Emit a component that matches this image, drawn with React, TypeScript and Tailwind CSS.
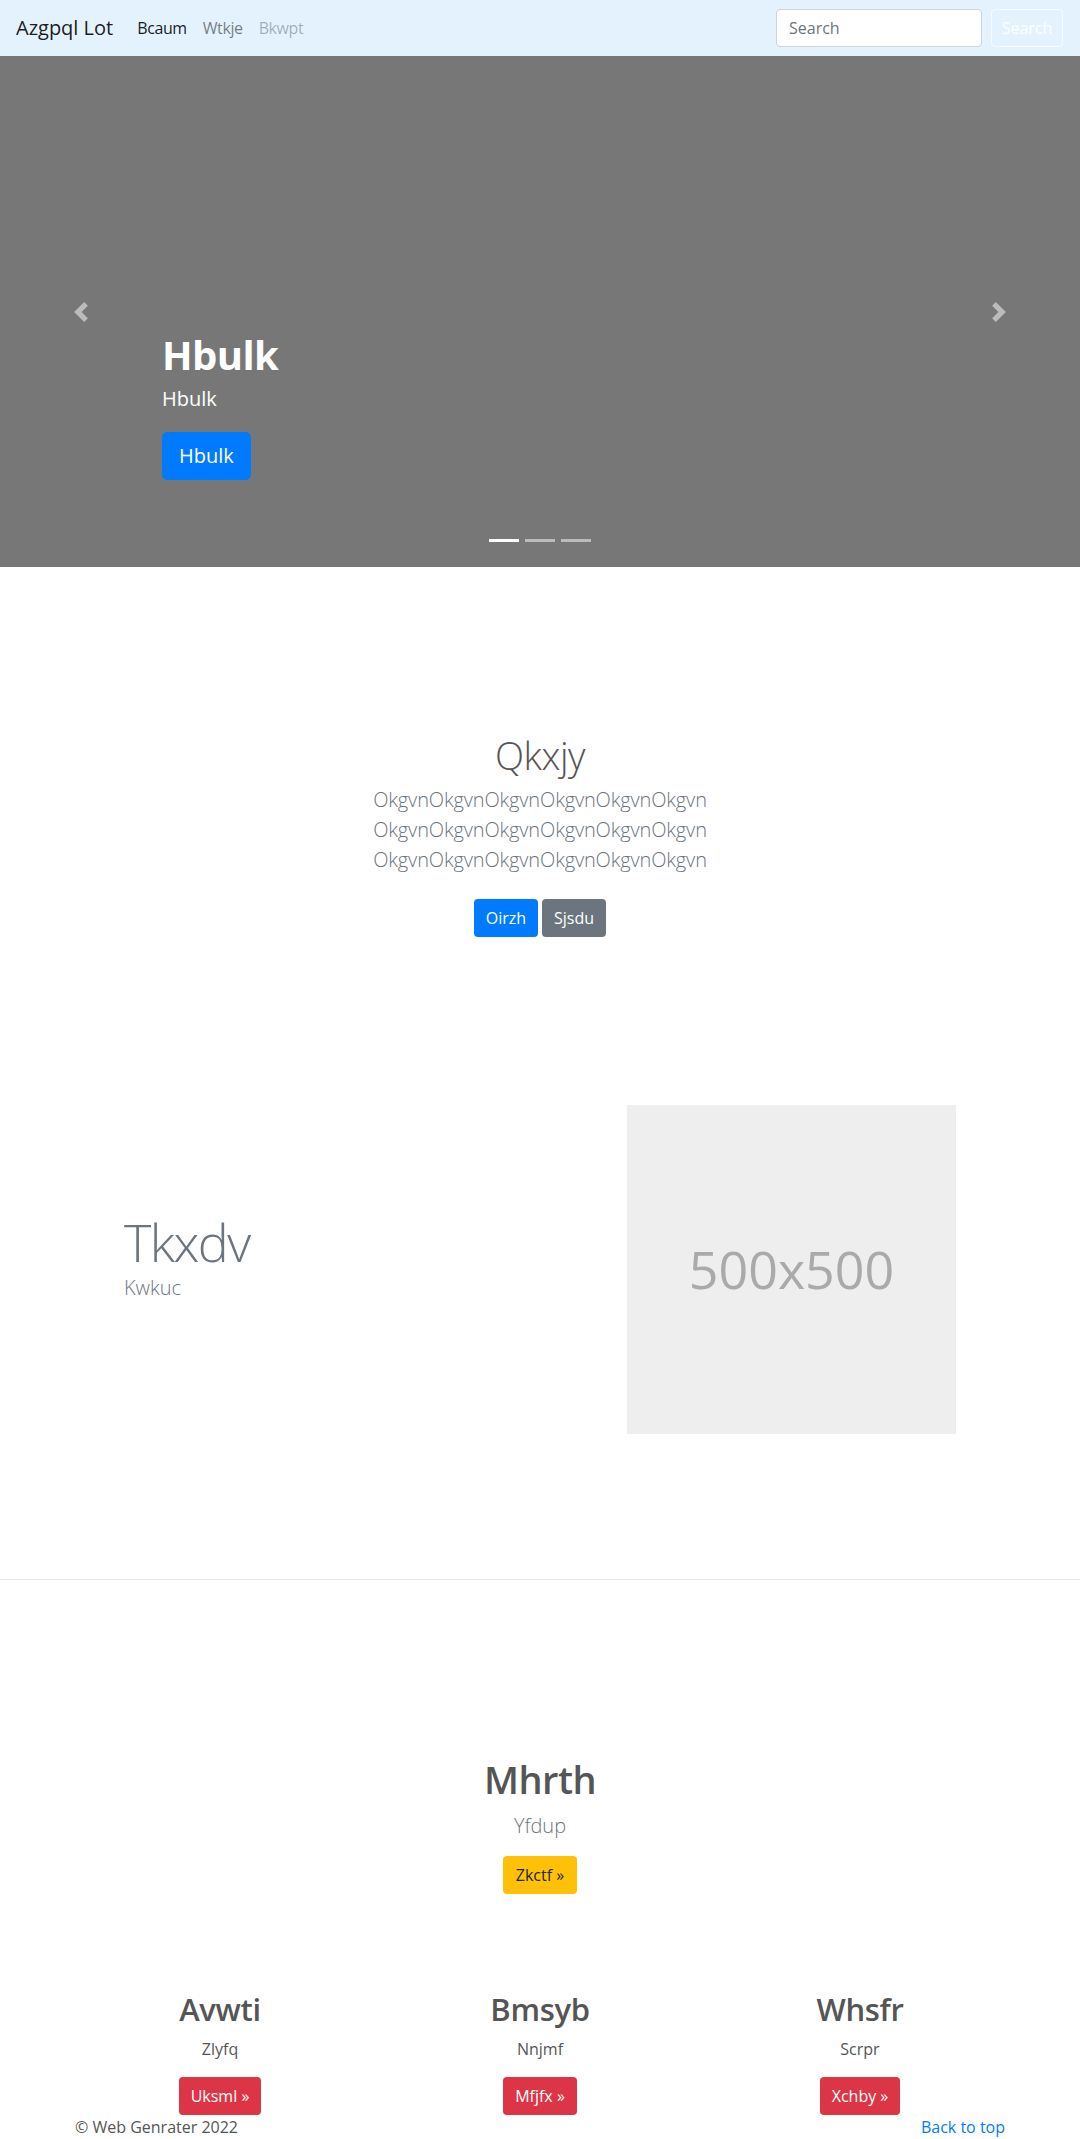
import React from "react";

const navLinks = [
  { label: "Bcaum", cls: "text-black/90" },
  { label: "Wtkje", cls: "text-black/50" },
  { label: "Bkwpt", cls: "text-black/30" },
];

const columns = [
  { title: "Avwti", text: "Zlyfq", btn: "Uksml »" },
  { title: "Bmsyb", text: "Nnjmf", btn: "Mfjfx »" },
  { title: "Whsfr", text: "Scrpr", btn: "Xchby »" },
];

const Chevron = ({ dir }: { dir: "prev" | "next" }) => (
  <svg width="20" height="20" viewBox="0 0 8 8" fill="#fff" fillOpacity="0.5">
    {dir === "prev" ? (
      <path d="M5.25 0l-4 4 4 4 1.5-1.5L4.25 4l2.5-2.5L5.25 0z" />
    ) : (
      <path d="M2.75 0l-1.5 1.5L3.75 4l-2.5 2.5L2.75 8l4-4-4-4z" />
    )}
  </svg>
);

const Navbar = () => (
  <nav className="h-[56px] bg-[#e3f2fd] flex items-center pl-4 pr-[17px]">
    <span className="text-[20px] text-black/90 mr-4">Azgpql Lot</span>
    <div className="flex">
      {navLinks.map((l) => (
        <span key={l.label} className={`px-2 text-[16px] tracking-[-0.4px] ${l.cls}`}>
          {l.label}
        </span>
      ))}
    </div>
    <div className="ml-auto flex items-center">
      <input
        placeholder="Search"
        className="w-[206px] h-[38px] bg-white border border-[#ced4da] rounded-[4px] px-3 text-[16px] text-[#495057] placeholder:text-[#6c757d] mr-[9px]"
      />
      <button className="w-[72px] h-[38px] border border-white/70 rounded-[4px] text-[16px] text-white/90">
        Search
      </button>
    </div>
  </nav>
);

const Hero = () => (
  <div className="relative h-[511px] bg-[#777777]">
    {/* carousel controls */}
    <div className="absolute left-0 top-0 bottom-0 w-[15%] flex items-center justify-center">
      <Chevron dir="prev" />
    </div>
    <div className="absolute right-0 top-0 bottom-0 w-[15%] flex items-center justify-center">
      <Chevron dir="next" />
    </div>

    <div className="pl-[162px] pt-[275px] text-white">
      <h1 className="text-[40px] font-bold leading-[1.2] tracking-[-0.6px] mb-[5px]">Hbulk</h1>
      <p className="text-[20px] leading-[30px] mb-[18px]">Hbulk</p>
      <button className="bg-[#007bff] border border-[#007bff] rounded-[5px] px-4 py-2 text-[20px] leading-[30px] text-white">
        Hbulk
      </button>
    </div>

    {/* indicators */}
    <div className="absolute left-0 right-0 bottom-[25px] flex justify-center gap-[6px]">
      <span className="w-[30px] h-[3px] bg-white" />
      <span className="w-[30px] h-[3px] bg-white/50" />
      <span className="w-[30px] h-[3px] bg-white/50" />
    </div>
  </div>
);

const Intro = () => (
  <section className="pt-[166px] flex flex-col items-center text-center">
    <h1 className="text-[38px] font-light leading-[1.2] tracking-[-0.5px] text-[#555555] mb-[6px]">Qkxjy</h1>
    <p className="text-[20px] font-light leading-[30px] tracking-[-0.15px] text-[#6c757d] mb-6">
      OkgvnOkgvnOkgvnOkgvnOkgvnOkgvn
      <br />
      OkgvnOkgvnOkgvnOkgvnOkgvnOkgvn
      <br />
      OkgvnOkgvnOkgvnOkgvnOkgvnOkgvn
    </p>
    <div className="flex gap-1">
      <button className="h-[38px] w-[64px] rounded-[4px] bg-[#007bff] text-white text-[16px]">Oirzh</button>
      <button className="h-[38px] w-[64px] rounded-[4px] bg-[#6c757d] text-white text-[16px]">Sjsdu</button>
    </div>
  </section>
);

const Featurette = () => (
  <section className="pt-[168px] pb-[145px] pl-[124px] flex items-center">
    <div className="w-[503px]">
      <h2 className="text-[52px] font-light leading-[1.2] tracking-[-1.5px] text-[#6c757d]">Tkxdv</h2>
      <p className="text-[20px] font-light leading-[30px] text-[#6c757d] mb-6">Kwkuc</p>
    </div>
    <div className="w-[329px] h-[329px] bg-[#eeeeee] flex items-center justify-center">
      <span className="text-[52px] text-[#aaaaaa]">500x500</span>
    </div>
  </section>
);

const Marketing = () => (
  <section className="border-t border-[#e6e6e6]">
    <div className="pt-[176px] flex flex-col items-center text-center">
      <h2 className="text-[38px] font-semibold leading-[1.26] tracking-[-0.5px] text-[#555555] mb-2">Mhrth</h2>
      <p className="text-[20px] font-light leading-[30px] text-[#6c757d] mb-[15px]">Yfdup</p>
      <button className="h-[38px] w-[74px] rounded-[4px] bg-[#ffc107] text-[#212529] text-[16px]">Zkctf »</button>
    </div>

    <div className="w-[960px] mx-auto grid grid-cols-3 pt-[96px]">
      {columns.map((c) => (
        <div key={c.title} className="flex flex-col items-center text-center">
          <h2 className="text-[31px] font-semibold leading-[1.24] tracking-[-0.3px] text-[#555555] mb-2">{c.title}</h2>
          <p className="text-[16px] leading-[24px] text-[#555555] mb-4">{c.text}</p>
          <button className="h-[38px] px-3 rounded-[4px] bg-[#dc3545] text-white text-[16px]">{c.btn}</button>
        </div>
      ))}
    </div>
  </section>
);

const Footer = () => (
  <footer className="w-[960px] mx-auto px-[15px] flex justify-between text-[16px] leading-[24px]">
    <span className="text-[#555555]">© Web Genrater 2022</span>
    <span className="text-[#007bff]">Back to top</span>
  </footer>
);

export default function App() {
  return (
    <div className="min-h-screen bg-white font-['Open_Sans',sans-serif]">
      <Navbar />
      <Hero />
      <Intro />
      <Featurette />
      <Marketing />
      <Footer />
    </div>
  );
}
